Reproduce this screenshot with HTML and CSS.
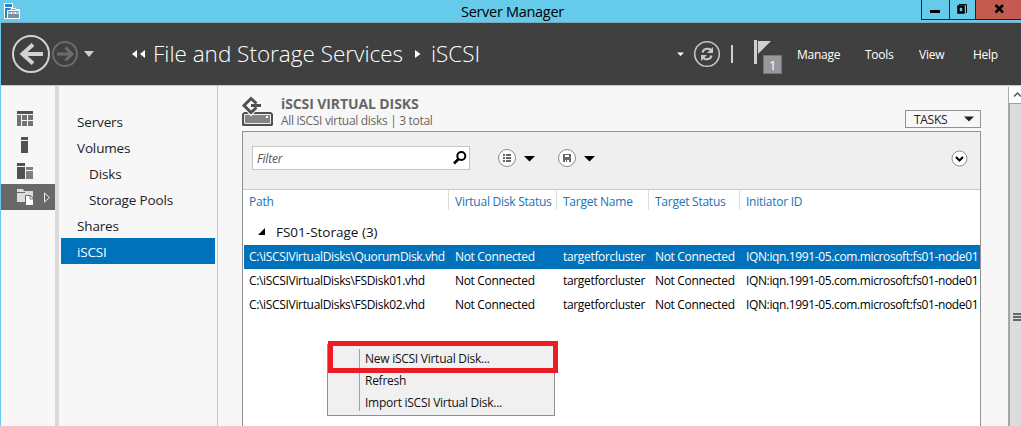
FILE: index.html
```html
<!DOCTYPE html>
<html lang="en">
<head>
<meta charset="utf-8">
<title>Server Manager</title>
<link rel="stylesheet" href="styles.css">
</head>
<body>
<div class="window">
  <header class="titlebar">
    <svg class="app-icon" width="18" height="18" viewBox="0 0 18 18"><path d="M1.500 1.500h8v6h7v9h-15z" fill="#2484cc" stroke="#fff"/><path d="M2 5.500h7" stroke="#fff"/><path d="M8 8V6.500h5V8M4.500 8.500h12v8h-12z" fill="#7792a8" stroke="#fff"/><path d="M5 11h11M8.500 10v2M12.500 10v2" stroke="#fff"/></svg>
    <h1 class="window-title">Server Manager</h1>
    <div class="window-buttons">
      <span class="win-btn minimize"><svg width="27" height="19"><path d="M8 10h10v3H8z"/></svg></span>
      <span class="win-btn restore"><svg width="25" height="19"><path d="M8.500 6.500h5v6h-5z" fill="none" stroke="#000" stroke-width="2.500"/><path d="M9 4.500h7.500V13" fill="none" stroke="#000"/></svg></span>
      <span class="win-btn close"><svg width="45" height="19"><path d="M19.500 5l7.500 7.500M27 5l-7.500 7.500" stroke="#000" stroke-width="2.600"/></svg></span>
    </div>
  </header>

  <div class="navbar">
    <svg class="history" width="95" height="62"><circle cx="30" cy="31" r="18" fill="none" stroke="#d2d2d2" stroke-width="2"/><path d="M42 31H21M32 21.500L21.500 31 32 40.500" fill="none" stroke="#d2d2d2" stroke-width="4"/><circle cx="64" cy="31" r="12" fill="none" stroke="#6c6c6c" stroke-width="2"/><path d="M56 31h14M64.500 24.500L71 31l-6.500 6.500" fill="none" stroke="#6c6c6c" stroke-width="3"/><path d="M83 28h10l-5 6z" fill="#d0d0d0"/></svg>
    <svg class="crumb-back" width="14" height="10"><path d="M5 1v8L0 5zM13 1v8L8 5z" fill="#fff"/></svg>
    <span class="crumb crumb-parent">File and Storage Services</span>
    <svg class="crumb-sep" width="6" height="10"><path d="M0 1v8l5.500-4z" fill="#fff"/></svg>
    <span class="crumb crumb-leaf">iSCSI</span>
    <svg class="nav-tools" width="106" height="62"><path d="M1 29.500h7L4.500 33z" fill="#fff"/><circle cx="31" cy="31" r="12.300" fill="none" stroke="#c4c4c4" stroke-width="1.600"/><path d="M26.500 29.500q1-4.200 6-3.700 1.500.2 2.500 1.500M35.500 32.500q-1 4.200-6 3.700-1.500-.2-2.500-1.500" fill="none" stroke="#c8c8c8" stroke-width="2.200"/><path d="M37 24v6h-6zM25 38v-6h6z" fill="#c8c8c8"/><path d="M55 22h2v18h-2zM78 17h3v24h-3z" fill="#cfcfcf"/><path d="M82 18h13L82 31z" fill="#cfcfcf"/><path d="M81.500 18v11" stroke="#555"/><path d="M87.500 32.500h18v18h-18z" fill="#98979a" stroke="#77767a"/><text x="93" y="47" class="flag-count">1</text></svg>
    <nav class="menu">
      <span class="menu-manage">Manage</span><span class="menu-tools">Tools</span><span class="menu-view">View</span><span class="menu-help">Help</span>
    </nav>
  </div>

  <div class="body">
    <aside class="rail">
      <span class="rail-item"><svg width="54" height="26"><path d="M16 5h16v3H16z" fill="#525252"/><path d="M16 9h4v11h-4zM21 9h5v5h-5zM27 9h5v5h-5zM21 15h5v5h-5zM27 15h5v5h-5z" fill="#737373"/></svg></span>
      <span class="rail-item"><svg width="54" height="26"><path d="M20 5h7v3h-7zM20 9h7v12h-7z" fill="#525252"/></svg></span>
      <span class="rail-item"><svg width="54" height="26"><path d="M16 5h8v3h-8zM16 9h8v12h-8z" fill="#525252"/><path d="M25 9h7v3h-7zM25 13h7v8h-7z" fill="#808080"/></svg></span>
      <span class="rail-item current"><svg width="54" height="26"><path d="M16 5h6l1 2h1v1h-8zM16 9h8V7h8v11H16z" fill="#dcdcdc"/><path d="M24.500 11.500h5l3 3v7h-8z" fill="#fff" stroke="#686868"/><path d="M29 12v3h3" fill="none" stroke="#686868"/><path d="M43.500 9v9l5-4.500z" fill="none" stroke="#eee"/></svg></span>
    </aside>
    <nav class="side">
      <span class="side-item">Servers</span>
      <span class="side-item">Volumes</span>
      <span class="side-item sub">Disks</span>
      <span class="side-item sub">Storage Pools</span>
      <span class="side-item">Shares</span>
      <span class="side-item selected">iSCSI</span>
    </nav>
    <main class="content">
      <div class="tile-head">
        <svg class="disk-icon" width="33" height="31"><path d="M3 16h27l2 2v11l-1 1H2l-1-1V18z" fill="#505050"/><path d="M3.500 18.500h26v9h-26z" fill="#858585" stroke="#eee"/><path d="M25 20h2v2h-2z" fill="#fff"/><path d="M10 20.500l-8-9 8-9 8 9z" fill="#f7f7f7"/><path d="M15.500 7.500l-5.500-5L3 9.500l7 7 5.500-5" fill="none" stroke="#505050" stroke-width="3"/><path d="M10 9.500h10" stroke="#505050" stroke-width="3"/></svg>
        <div class="tile-titles">
          <h2 class="tile-title">iSCSI VIRTUAL DISKS</h2>
          <p class="tile-sub">All iSCSI virtual disks | 3 total</p>
        </div>
        <div class="tasks"><span>TASKS</span><svg width="10" height="6"><path d="M0 .5h10L5 5.500z" fill="#222"/></svg></div>
      </div>
      <section class="panel">
        <div class="toolbar">
          <div class="filter"><span>Filter</span><svg width="14" height="14"><circle cx="8.300" cy="5" r="4" fill="none" stroke="#000" stroke-width="2"/><path d="M5.500 8L1 12.500" stroke="#000" stroke-width="2.600"/></svg></div>
          <svg class="tool-list" width="38" height="20"><circle cx="10" cy="10" r="8.500" fill="#fff" stroke="#8b8b8b"/><path d="M6 6h2v2H6zM9 6h5v2H9zM6 9h2v2H6zM9 9h5v2H9zM6 12h2v2H6zM9 12h5v2H9z" fill="#666"/><path d="M27 8h11l-5.500 5.500z"/></svg>
          <svg class="tool-save" width="38" height="20"><circle cx="10" cy="10" r="8.500" fill="#fff" stroke="#8b8b8b"/><path d="M6 6h8v8H6z" fill="#666"/><path d="M8 7h4v2H8zM8 12h1v2H8zM10 12h2v2h-2z" fill="#fff"/><path d="M27 8h11l-5.500 5.500z"/></svg>
          <svg class="tool-expand" width="17" height="17"><circle cx="8.500" cy="8.500" r="7.500" fill="#fff" stroke="#8b8b8b"/><path d="M5 7l3.500 3.500L12 7" fill="none" stroke="#000" stroke-width="2"/></svg>
        </div>
        <div class="grid">
          <div class="grid-row grid-head"><span>Path</span><span>Virtual Disk Status</span><span>Target Name</span><span>Target Status</span><span>Initiator ID</span></div>
          <div class="group"><svg width="8" height="8"><path d="M7 0v7H0z"/></svg><span>FS01-Storage (3)</span></div>
          <div class="grid-row selected"><span>C:\iSCSIVirtualDisks\QuorumDisk.vhd</span><span>Not Connected</span><span>targetforcluster</span><span>Not Connected</span><span class="iqn">IQN:iqn.1991-05.com.microsoft:fs01-node01</span></div>
          <div class="grid-row"><span>C:\iSCSIVirtualDisks\FSDisk01.vhd</span><span>Not Connected</span><span>targetforcluster</span><span>Not Connected</span><span class="iqn">IQN:iqn.1991-05.com.microsoft:fs01-node01</span></div>
          <div class="grid-row"><span>C:\iSCSIVirtualDisks\FSDisk02.vhd</span><span>Not Connected</span><span>targetforcluster</span><span>Not Connected</span><span class="iqn">IQN:iqn.1991-05.com.microsoft:fs01-node01</span></div>
        </div>
      </section>
    </main>
    <div class="scrollbar">
      <div class="scroll-up"><svg width="12" height="15"><path d="M5 9.500L8.500 6l3.500 3.500" fill="none" stroke="#555" stroke-width="1.500"/></svg></div>
      <div class="scroll-thumb"><svg width="8" height="9"><path d="M0 0h8v2H0zM0 3h8v2H0zM0 6h8v2H0z" fill="#666"/></svg></div>
    </div>
  </div>

  <div class="context-menu">
    <div class="context-items"><span>New iSCSI Virtual Disk...</span><span>Refresh</span><span>Import iSCSI Virtual Disk...</span></div>
  </div>
  <div class="highlight"></div>
</div>
</body>
</html>
```
FILE: styles.css
```css
* { box-sizing: border-box; }
body { margin: 0; font-family: "Open Sans", "Noto Sans", sans-serif; font-size: 12px; color: #111; }
svg { display: block; flex: none; }
h1, h2, p { margin: 0; font-weight: 400; }
.window { position: relative; width: 1021px; height: 426px; overflow: hidden; display: flex; flex-direction: column; background: #f7f7f7; border-left: 1px solid #66caea; white-space: nowrap; }

.titlebar { height: 23px; flex: none; display: flex; align-items: flex-start; background: #66caea; border-bottom: 1px solid #79a9bc; }
.app-icon { margin: 2px 0 0 2px; }
.window-title { margin-left: 440px; width: 104px; font-size: 14.5px; line-height: 24px; letter-spacing: -0.3px; color: #000; }
.window-buttons { display: flex; margin-left: auto; height: 20px; border: 1px solid #222; border-top: 0; border-right: 0; }
.win-btn + .win-btn { border-left: 1px solid #222; }
.close { background: #c55a50; }

.navbar { height: 62px; flex: none; display: flex; align-items: center; background: #404040; color: #fff; }
.crumb-back { margin-left: 36px; }
.crumb { font-size: 22.5px; font-weight: 300; line-height: 30px; }
.crumb-parent { margin-left: 7px; width: 251px; }
.crumb-sep { margin-left: 11px; }
.crumb-leaf { margin-left: 10px; width: 50px; }
.nav-tools { margin-left: 195px; }
.flag-count { font-size: 13px; fill: #fff; }
.menu { display: flex; margin-left: 15px; letter-spacing: -0.25px; }
.menu span { flex: none; }
.menu-manage { width: 68px; }
.menu-tools { width: 54px; }
.menu-view { width: 54px; }

.body { flex: 1; display: flex; min-height: 0; border-top: 1px solid #c8c8c8; }
.rail { width: 54px; padding-top: 20px; }
.rail-item { display: block; height: 26px; }
.current { background: #686868; }
.side { width: 163px; padding: 22px 2px 0 2px; border-left: 4px solid #dadada; border-right: 1px solid #c4c4c4; display: flex; flex-direction: column; }
.side-item { height: 26px; flex: none; padding-left: 16px; font-size: 13.5px; line-height: 28px; letter-spacing: -0.15px; color: #222; }
.sub { padding-left: 28px; }
.side .selected { background: #0072bc; color: #fff; }

.content { width: 790px; display: flex; flex-direction: column; padding-left: 24px; }
.tile-head { height: 45px; flex: none; display: flex; padding-top: 10px; }
.disk-icon { margin-left: -1px; }
.tile-titles { margin-left: 7px; width: 624px; }
.tile-title { font-size: 14px; font-weight: 700; line-height: 15px; letter-spacing: -0.1px; color: #666; }
.tile-sub { line-height: 19px; letter-spacing: -0.31px; color: #666; }
.tasks { width: 76px; height: 18px; margin-top: 14px; display: flex; align-items: center; justify-content: space-between; padding: 0 6px 0 8px; border: 1px solid #919191; letter-spacing: -0.3px; color: #222; }

.panel { width: 739px; flex: 1; border: 1px solid #919191; border-bottom: 0; background: #fff; }
.toolbar { height: 58px; display: flex; align-items: flex-start; padding: 14px 12px 0 9px; background: #efefef; border-bottom: 1px solid #c8c8c8; }
.filter { width: 218px; height: 24px; display: flex; align-items: center; justify-content: space-between; padding: 0 2px 0 4px; border: 1px solid #c4c4c4; background: #fff; font-style: italic; letter-spacing: -0.2px; color: #555; }
.tool-list { margin: 2px 0 0 27px; }
.tool-save { margin: 2px 0 0 22px; }
.tool-expand { margin: 4px 0 0 auto; }
.grid { padding-left: 1px; }
.grid-row { display: grid; grid-template-columns: 206px 108px 92px 91px 1fr; height: 24px; padding-left: 5px; line-height: 24px; letter-spacing: -0.33px; color: #000; }
.iqn { letter-spacing: -0.37px; }
.grid-head { grid-template-columns: 204px 108px 92px 91px 1fr; padding-left: 0; letter-spacing: -0.25px; color: #1873b9; }
.grid-head span { padding-left: 6px; height: 20px; }
.grid-head span:first-child { padding-left: 5px; }
.grid-head span + span { border-left: 1px solid #ddd; }
.group { height: 31px; display: flex; align-items: center; padding: 5px 0 0 14px; font-size: 13.5px; }
.group span { margin-left: 10px; }
.grid .selected { background: #0072bc; color: #fff; }

.scrollbar { flex: 1; display: flex; flex-direction: column; border-left: 1px solid #a8a8a8; margin-top: 1px; }
.scroll-up { height: 16px; background: #fff; }
.scroll-thumb { flex: 1; border: 1px solid #a0a0a0; border-right: 0; border-bottom: 0; background: #dcdcdc; padding: 209px 0 0 3px; }

.context-menu { position: absolute; left: 326px; top: 344px; width: 228px; height: 72px; padding: 4px 0 4px 31px; background: #f0f0f0; border: 1px solid #919191; }
.context-items { display: flex; flex-direction: column; height: 62px; padding-left: 5px; border-left: 1px solid #a0a0a0; letter-spacing: -0.26px; }
.context-items span { height: 22px; flex: none; line-height: 20px; }
.highlight { position: absolute; left: 327px; top: 341px; width: 230px; height: 32px; border: 5px solid #ed1c24; }
```
